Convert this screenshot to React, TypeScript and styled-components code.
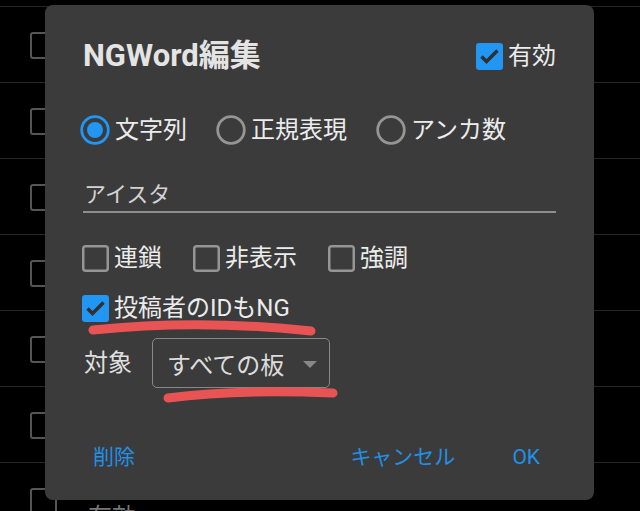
import React from 'react';
import styled, { createGlobalStyle } from 'styled-components';

const GlobalStyle = createGlobalStyle`
  html, body {
    margin: 0;
    padding: 0;
    background: #000;
  }
  body {
    font-family: Roboto, "Noto Sans CJK JP", sans-serif;
    overflow: hidden;
  }
`;

const Screen = styled.div`
  position: relative;
  width: 640px;
  height: 511px;
  overflow: hidden;
  background: #000;
`;

const List = styled.div`
  display: flex;
  flex-direction: column;
  padding-top: 6px;
`;

const ListRow = styled.div`
  display: flex;
  align-items: flex-start;
  height: 76px;
  box-sizing: border-box;
  border-top: 1px solid #262626;
  padding: 25px 0 0 30px;
`;

const ListBox = styled.div`
  width: 27px;
  height: 27px;
  box-sizing: border-box;
  border: 2px solid #555;
  border-radius: 3px;
`;

const ListLabel = styled.span`
  margin: 14px 0 0 31px;
  font-size: 24px;
  line-height: 30px;
  color: #777;
`;

const Dialog = styled.div`
  position: absolute;
  left: 45px;
  top: 5px;
  width: 549px;
  height: 495px;
  box-sizing: border-box;
  padding: 31px 38px 0 38px;
  background: #3b3b3b;
  border-radius: 8px;
  display: flex;
  flex-direction: column;
  color: #e6e6e6;
`;

const Header = styled.div`
  display: flex;
  align-items: center;
  justify-content: space-between;
  height: 40px;
`;

const Title = styled.h1`
  margin: 0;
  font-size: 31px;
  line-height: 40px;
  font-weight: 700;
  color: #e4e4e4;
`;

const Row = styled.div<{ $top: number; $height: number; $gap?: number; $shift?: number }>`
  display: flex;
  align-items: center;
  margin-top: ${(p) => p.$top}px;
  margin-left: ${(p) => p.$shift ?? 0}px;
  height: ${(p) => p.$height}px;
  gap: ${(p) => p.$gap ?? 0}px;
`;

const Option = styled.label`
  display: flex;
  align-items: center;
  gap: 5px;
  font-size: 24px;
  line-height: 30px;
  color: #ececec;
  white-space: nowrap;
`;

const BoxIcon = styled.svg`
  flex: none;
  display: block;
`;

const TextField = styled.div`
  margin-top: 31px;
  height: 33px;
  border-bottom: 2px solid #8e8e8e;
  padding-left: 1px;
  font-size: 22px;
  line-height: 33px;
  color: #d2d2d2;
`;

const FieldLabel = styled.span`
  font-size: 24px;
  line-height: 30px;
  color: #e0e0e0;
  margin-left: 1px;
`;

const Select = styled.div`
  display: flex;
  align-items: center;
  justify-content: space-between;
  width: 178px;
  height: 50px;
  box-sizing: border-box;
  border: 1.5px solid #888;
  border-radius: 5px;
  padding: 0 12px 0 14px;
  font-size: 24px;
  color: #dcdcdc;
`;

const Caret = styled.span`
  width: 0;
  height: 0;
  border-left: 7px solid transparent;
  border-right: 7px solid transparent;
  border-top: 7px solid #888;
  margin-top: 2px;
`;

const Footer = styled.div`
  display: flex;
  align-items: center;
  justify-content: space-between;
  margin-top: 49px;
  height: 40px;
`;

const ActionGroup = styled.div`
  display: flex;
  align-items: center;
  gap: 57px;
  margin-right: 16px;
`;

const TextButton = styled.button<{ $inset?: number }>`
  background: none;
  border: none;
  padding: 0;
  margin-left: ${(p) => p.$inset ?? 0}px;
  font-family: Roboto, "Noto Sans CJK JP", sans-serif;
  font-size: 21px;
  line-height: 30px;
  color: #2190e6;
  cursor: pointer;
`;

const Marks = styled.svg`
  position: absolute;
  left: 0;
  top: 0;
  pointer-events: none;
`;

const Checkbox = ({ checked }: { checked?: boolean }) =>
  checked ? (
    <BoxIcon width="27" height="27" viewBox="0 0 27 27">
      <rect x="0" y="0" width="27" height="27" rx="3" fill="#2196f3" />
      <path d="M5.5 13.5l5 5 11-11" fill="none" stroke="#303030" strokeWidth="3.4" />
    </BoxIcon>
  ) : (
    <BoxIcon width="27" height="27" viewBox="0 0 27 27">
      <rect x="1.25" y="1.25" width="24.5" height="24.5" rx="2.5" fill="none" stroke="#959595" strokeWidth="2.5" />
    </BoxIcon>
  );

const Radio = ({ checked }: { checked?: boolean }) => (
  <BoxIcon width="30" height="30" viewBox="0 0 30 30">
    <circle cx="15" cy="15" r="13.3" fill="none" stroke={checked ? '#2196f3' : '#959595'} strokeWidth="2.8" />
    {checked && <circle cx="15" cy="15" r="8" fill="#2196f3" />}
  </BoxIcon>
);

const rows = ['', '', '', '', '', '', '有効'];

const App = () => (
  <Screen>
    <GlobalStyle />
    <List>
      {rows.map((label, i) => (
        <ListRow key={i}>
          <ListBox />
          <ListLabel>{label}</ListLabel>
        </ListRow>
      ))}
    </List>

    <Dialog>
      <Header>
        <Title>NGWord編集</Title>
        <Option>
          <Checkbox checked />
          有効
        </Option>
      </Header>

      <Row $top={37} $height={34} $gap={29} $shift={-3}>
        <Option>
          <Radio checked />
          文字列
        </Option>
        <Option>
          <Radio />
          正規表現
        </Option>
        <Option>
          <Radio />
          アンカ数
        </Option>
      </Row>

      <TextField>アイスタ</TextField>

      <Row $top={30} $height={30} $gap={31} $shift={-1}>
        <Option>
          <Checkbox />
          連鎖
        </Option>
        <Option>
          <Checkbox />
          非表示
        </Option>
        <Option>
          <Checkbox />
          強調
        </Option>
      </Row>

      <Row $top={20} $height={30} $shift={-1}>
        <Option>
          <Checkbox checked />
          投稿者のIDもNG
        </Option>
      </Row>

      <Row $top={15} $height={50} $gap={20}>
        <FieldLabel>対象</FieldLabel>
        <Select>
          すべての板
          <Caret />
        </Select>
      </Row>

      <Footer>
        <TextButton $inset={10}>削除</TextButton>
        <ActionGroup>
          <TextButton>キャンセル</TextButton>
          <TextButton>OK</TextButton>
        </ActionGroup>
      </Footer>
    </Dialog>

    <Marks width="640" height="511" viewBox="0 0 640 511">
      <path d="M93 330 Q 200 319 311 331" fill="none" stroke="#e85454" strokeWidth="9" strokeLinecap="round" />
      <path d="M168 398 Q 235 389 333 393" fill="none" stroke="#e85454" strokeWidth="9" strokeLinecap="round" />
    </Marks>
  </Screen>
);

export default App;
